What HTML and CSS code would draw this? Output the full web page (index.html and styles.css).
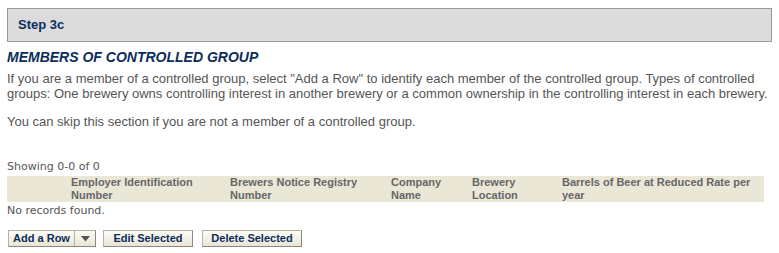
FILE: index.html
```html
<!DOCTYPE html>
<html>
<head>
<meta charset="utf-8">
<link rel="stylesheet" href="styles.css">
</head>
<body>
<div class="page">
  <div class="step">Step 3c</div>
  <h2 class="title">MEMBERS OF CONTROLLED GROUP</h2>
  <p class="desc">If you are a member of a controlled group, select "Add a Row" to identify each member of the controlled group. Types of controlled groups: One brewery owns controlling interest in another brewery or a common ownership in the controlling interest in each brewery.</p>
  <p class="desc skip">You can skip this section if you are not a member of a controlled group.</p>
  <div class="showing">Showing 0-0 of 0</div>
  <div class="thead">
    <div class="col c0"></div>
    <div class="col c1">Employer Identification Number</div>
    <div class="col c2">Brewers Notice Registry Number</div>
    <div class="col c3">Company Name</div>
    <div class="col c4">Brewery Location</div>
    <div class="col c5">Barrels of Beer at Reduced Rate per year</div>
  </div>
  <div class="norec">No records found.</div>
  <div class="buttons">
    <div class="btn split"><span class="main">Add a Row</span><span class="arrow"><svg width="9" height="6" viewBox="0 0 9 6"><path d="M0 0H9L4.5 5.5Z" fill="#555"/></svg></span></div>
    <div class="btn edit">Edit Selected</div>
    <div class="btn del">Delete Selected</div>
  </div>
</div>
</body>
</html>
```
FILE: styles.css
```css
html, body { margin: 0; padding: 0; background: #fff; }
.page { padding: 8px 7px 0 7px; font-family: "Liberation Sans", Arial, sans-serif; }
.step {
  box-sizing: border-box; height: 34px; line-height: 32px; width: 765px;
  border: 1px solid #999; background: #dcdcdc;
  padding-left: 10px; font-weight: bold; font-size: 13px; color: #0b2d5c;
}
.title {
  margin: 7px 0 0 0; font-size: 14px; font-style: italic; font-weight: bold;
  color: #0b2d5c; line-height: 16px;
}
.desc { margin: 6px 0 0 0; font-size: 13px; line-height: 15px; color: #555; }
.skip { margin-top: 13px; }
.showing {
  margin-top: 31px; font-family: "DejaVu Sans", Verdana, sans-serif;
  font-size: 11px; color: #555; line-height: 13px;
}
.thead {
  display: flex; background: #ebe7d7; width: 757px; margin-top: 3px;
  font-size: 11px; font-weight: bold; color: #666; line-height: 13px;
}
.col { flex: none; }
.c0 { width: 64px; }
.c1 { width: 159px; }
.c2 { width: 161px; }
.c3 { width: 81px; }
.c4 { width: 90px; }
.c5 { width: 200px; }
.norec {
  font-family: "DejaVu Sans", Verdana, sans-serif; font-size: 11px; color: #555;
  line-height: 13px; margin-top: 2px;
}
.buttons { display: flex; margin-top: 13px; margin-left: 1px; }
.btn {
  box-sizing: border-box; height: 17px; line-height: 15px;
  border: 1px solid #b5b2a6; border-right-color: #8a887f; border-bottom-color: #8a887f;
  background: linear-gradient(#fdfcf6, #e9e5d5);
  font-size: 11px; font-weight: bold; color: #0b2d5c; text-align: center;
}
.split { display: flex; width: 88px; }
.split .main { width: 65px; border-right: 1px solid #b5b2a6; }
.split .arrow { flex: 1; display: flex; align-items: center; justify-content: center; }
.edit { width: 90px; margin-left: 7px; }
.del { width: 100px; margin-left: 9px; }
```
